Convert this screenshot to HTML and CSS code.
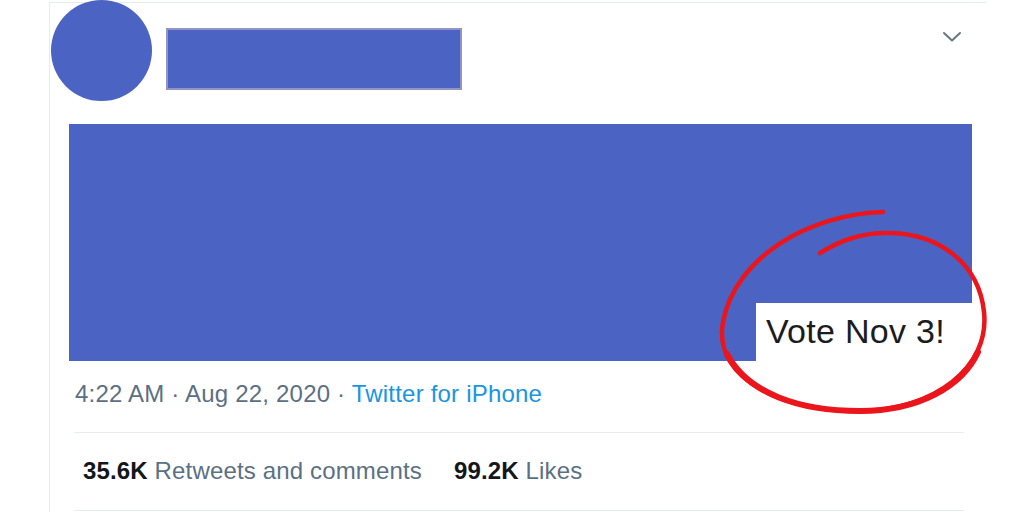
FILE: index.html
```html
<!DOCTYPE html>
<html>
<head>
<meta charset="utf-8">
<link rel="stylesheet" href="styles.css">
</head>
<body>
<div class="page">
  <article class="card">
    <header class="head">
      <div class="avatar"></div>
      <div class="name"></div>
      <svg class="chev" width="20" height="12" viewBox="0 0 20 12"><path d="M2 2 L10 9.5 L18 2" fill="none" stroke="#657786" stroke-width="2" stroke-linecap="round" stroke-linejoin="round"/></svg>
    </header>
    <div class="media">
      <div class="label">Vote Nov 3!</div>
    </div>
    <div class="meta">4:22 AM · Aug 22, 2020 · <span class="src">Twitter for iPhone</span></div>
    <div class="stats">
      <span class="stat"><b>35.6K</b> Retweets and comments</span>
      <span class="stat"><b>99.2K</b> Likes</span>
    </div>
  </article>
  <svg class="ring" width="1024" height="512" viewBox="0 0 1024 512">
    <path d="M883 210 C810 212 735 255 723 320 C712 380 790 410 860 409 C935 408 990 365 984 310 C979 262 940 232 890 231 C860 230 838 240 820 251" fill="none" stroke="#ea161c" stroke-width="4.5" stroke-linecap="round"/>
    <path d="M727 352 C748 392 800 409 860 409 C918 409 962 385 978 350" fill="none" stroke="#ea161c" stroke-width="6" stroke-linecap="round"/>
  </svg>
</div>
</body>
</html>
```
FILE: styles.css
```css
html, body {
  margin: 0;
  padding: 0;
  background: #ffffff;
}
body {
  width: 1024px;
  height: 512px;
  overflow: hidden;
  font-family: "Liberation Sans", Arial, sans-serif;
}
.page {
  position: relative;
  width: 1024px;
  height: 512px;
}
.card {
  margin: 2px 0 0 49px;
  width: 937px;
  height: 520px;
  border-top: 1px solid #e6ecf0;
  border-left: 1px solid #e6ecf0;
}
.head {
  display: flex;
  align-items: flex-start;
  margin-top: -3px;
  height: 101px;
}
.avatar {
  width: 101px;
  height: 101px;
  border-radius: 50%;
  background: #4b64c4;
  margin-left: 1px;
  flex: none;
}
.name {
  width: 292px;
  height: 58px;
  margin: 28px 0 0 14px;
  border: 2px solid #9394c6;
  background: #4b64c4;
}
.chev {
  margin: 31px 25px 0 auto;
}
.media {
  position: relative;
  margin: 23px 15px 0 19px;
  height: 237px;
  background: #4b64c4;
}
.label {
  position: absolute;
  right: -1px;
  bottom: 0;
  width: 207px;
  height: 50px;
  padding: 8px 0 0 10px;
  background: #ffffff;
  color: #1c1c1e;
  font-family: "Liberation Sans", Arial, sans-serif;
  font-size: 34px;
  line-height: 40px;
  letter-spacing: 0.3px;
  white-space: nowrap;
}
.meta {
  margin: 19px 23px 0 24px;
  padding: 0 0 24px 1px;
  border-bottom: 1px solid #e6ecf0;
  font-size: 24px;
  line-height: 28px;
  letter-spacing: 0.2px;
  color: #5b7083;
  white-space: nowrap;
}
.src {
  color: #1b95e0;
}
.stats {
  display: flex;
  gap: 32px;
  margin: 0 23px 0 24px;
  padding: 24px 0 25px 9px;
  border-bottom: 1px solid #e6ecf0;
  font-size: 24px;
  line-height: 28px;
  letter-spacing: 0.15px;
  color: #5b7083;
  white-space: nowrap;
}
.stat b {
  color: #14171a;
  font-weight: bold;
}
.ring {
  position: absolute;
  left: 0;
  top: 0;
  pointer-events: none;
}
```
